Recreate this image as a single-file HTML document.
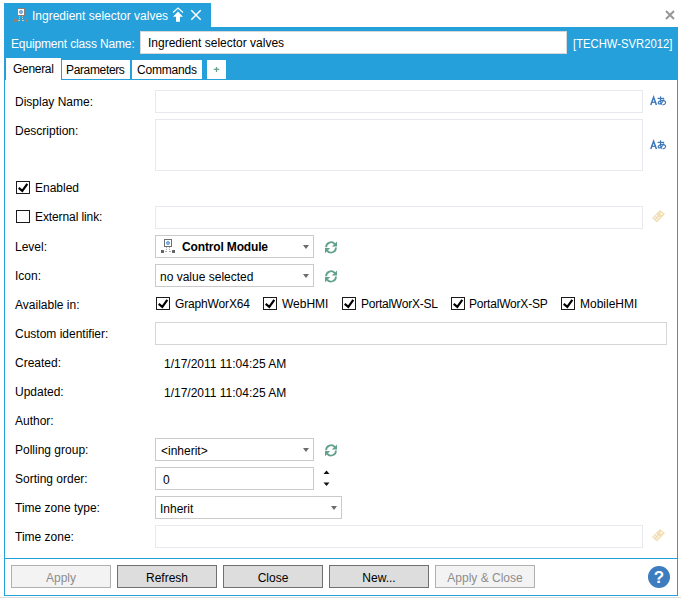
<!DOCTYPE html>
<html><head><meta charset="utf-8">
<style>
html,body{margin:0;padding:0;width:681px;height:599px;overflow:hidden;background:#fff;}
body{position:relative;font-family:"Liberation Sans",sans-serif;font-size:12px;color:#000;}
.a{position:absolute;}
.t{position:absolute;line-height:14px;white-space:nowrap;}
.inp{position:absolute;box-sizing:border-box;border:1px solid #e8e8ee;background:#fff;}
.cmb{position:absolute;box-sizing:border-box;border:1px solid #cacaca;background:#fff;}
.arr{position:absolute;width:0;height:0;border-left:3px solid transparent;border-right:3px solid transparent;border-top:4px solid #6b6b6b;}
.cb{position:absolute;box-sizing:border-box;width:14px;height:13px;border:1px solid #1a1a1a;background:#fff;}
.btn{position:absolute;box-sizing:border-box;width:100px;height:23px;top:565px;border:1px solid #707070;background:#dddddd;text-align:center;line-height:25px;color:#000;}
.btn.dis{border-color:#adb1b4;background:#f3f3f3;color:#8d8d8d;}
</style></head><body>
<!-- title tab -->
<div class="a" style="left:4px;top:3px;width:207px;height:24px;background:#26a0da;"></div>
<div class="t" style="left:32px;top:9px;color:#fff;">Ingredient selector valves</div>
<!-- window close x -->
<svg class="a" style="left:664px;top:9px" width="12" height="12" viewBox="0 0 12 12"><path d="M2 2L10 10M10 2L2 10" stroke="#979797" stroke-width="2"/></svg>
<!-- header -->
<div class="a" style="left:4px;top:27px;width:674px;height:33px;background:#26a0da;"></div>
<div class="t" style="left:11px;top:37px;color:#fff;letter-spacing:-0.15px;">Equipment class Name:</div>
<div class="a" style="left:140px;top:31px;width:427px;height:23px;background:#fff;box-sizing:border-box;border:1px solid #d8d8d8;"></div>
<div class="t" style="left:148px;top:36px;">Ingredient selector valves</div>
<div class="t" style="left:573px;top:37px;color:#fff;transform:scaleX(0.94);transform-origin:0 0;">[TECHW-SVR2012]</div>
<!-- tab strip -->
<div class="a" style="left:4px;top:60px;width:674px;height:20px;background:#26a0da;"></div>
<div class="a" style="left:6px;top:58px;width:55px;height:22px;background:#fff;"></div>
<div class="t" style="left:13px;top:62px;letter-spacing:-0.3px;">General</div>
<div class="a" style="left:62px;top:60px;width:68px;height:19px;background:#fff;"></div>
<div class="t" style="left:66px;top:63px;letter-spacing:-0.35px;">Parameters</div>
<div class="a" style="left:132px;top:60px;width:70px;height:19px;background:#fff;"></div>
<div class="t" style="left:137px;top:63px;letter-spacing:-0.2px;">Commands</div>
<div class="a" style="left:207px;top:60px;width:19px;height:19px;background:#fff;"></div>
<svg class="a" style="left:213px;top:66px" width="7" height="7" viewBox="0 0 7 7"><path d="M0.8 3.4H6.2M3.5 0.9V6.1" stroke="#6aa08f" stroke-width="1.3"/></svg>
<!-- body borders -->
<div class="a" style="left:4px;top:80px;width:1px;height:516px;background:#26a0da;"></div>
<div class="a" style="left:677px;top:80px;width:1px;height:516px;background:#26a0da;"></div>
<div class="a" style="left:4px;top:558px;width:674px;height:1px;background:#26a0da;"></div>
<div class="a" style="left:4px;top:595px;width:674px;height:1px;background:#26a0da;"></div>
<div class="a" style="left:0px;top:597px;width:681px;height:1px;background:#dcdcdc;"></div>

<!-- rows -->
<div class="t" style="left:15px;top:95px;">Display Name:</div>
<div class="inp" style="left:155px;top:90px;width:488px;height:23px;"></div>
<svg class="a" style="left:649px;top:95px" width="18" height="11" viewBox="649 95 18 11"><g stroke="#3b79bd" fill="none" stroke-width="1.5"><path d="M650.8 104.9L653.6 97.2L656.4 104.9"/><path d="M651.9 102.3H655.3" stroke-width="1.2"/><path d="M657.6 98.4H664.2" stroke-width="1.2"/><path d="M660.6 96.4C660.2 99.5 660.4 102 661.6 104.8" stroke-width="1.2"/><path d="M663.8 99.6C662.3 103 659.8 104.6 658.6 103.7C657.4 102.8 659.2 100.4 662.2 100.4C664.8 100.4 665.9 101.8 665.5 103.1C665.1 104.2 663.8 104.7 662.6 104.8" stroke-width="1.2"/></g></svg>

<div class="t" style="left:15px;top:124px;">Description:</div>
<div class="inp" style="left:155px;top:119px;width:488px;height:52px;"></div>
<svg class="a" style="left:649px;top:139px" width="18" height="11" viewBox="649 95 18 11"><g stroke="#3b79bd" fill="none" stroke-width="1.5"><path d="M650.8 104.9L653.6 97.2L656.4 104.9"/><path d="M651.9 102.3H655.3" stroke-width="1.2"/><path d="M657.6 98.4H664.2" stroke-width="1.2"/><path d="M660.6 96.4C660.2 99.5 660.4 102 661.6 104.8" stroke-width="1.2"/><path d="M663.8 99.6C662.3 103 659.8 104.6 658.6 103.7C657.4 102.8 659.2 100.4 662.2 100.4C664.8 100.4 665.9 101.8 665.5 103.1C665.1 104.2 663.8 104.7 662.6 104.8" stroke-width="1.2"/></g></svg>

<div class="cb" style="left:16px;top:181px;"></div>
<svg class="a" style="left:16px;top:181px" width="14" height="13" viewBox="0 0 14 13"><path d="M2.7 6.9L6.3 9.8L11.3 2.8" stroke="#000" stroke-width="2.2" fill="none"/></svg>
<div class="t" style="left:35px;top:181px;">Enabled</div>

<div class="cb" style="left:16px;top:210px;"></div>
<div class="t" style="left:35px;top:210px;letter-spacing:-0.1px;">External link:</div>
<div class="inp" style="left:155px;top:206px;width:488px;height:23px;"></div>

<div class="t" style="left:15px;top:240px;">Level:</div>
<div class="cmb" style="left:155px;top:235px;width:159px;height:23px;"></div>
<div class="t" style="left:182px;top:240px;font-weight:bold;letter-spacing:-0.15px;">Control Module</div>
<div class="arr" style="left:303px;top:245px;"></div>

<div class="t" style="left:15px;top:269px;">Icon:</div>
<div class="cmb" style="left:155px;top:264px;width:159px;height:23px;"></div>
<div class="t" style="left:160px;top:270px;">no value selected</div>
<div class="arr" style="left:303px;top:274px;"></div>

<div class="t" style="left:15px;top:298px;">Available in:</div>
<div class="cb" style="left:156px;top:297px;"></div>
<div class="t" style="left:175px;top:297px;letter-spacing:-0.15px;">GraphWorX64</div>
<div class="cb" style="left:263px;top:297px;"></div>
<div class="t" style="left:282px;top:297px;">WebHMI</div>
<div class="cb" style="left:342px;top:297px;"></div>
<div class="t" style="left:361px;top:297px;letter-spacing:-0.25px;">PortalWorX-SL</div>
<div class="cb" style="left:451px;top:297px;"></div>
<div class="t" style="left:469px;top:297px;letter-spacing:-0.2px;">PortalWorX-SP</div>
<div class="cb" style="left:561px;top:297px;"></div>
<div class="t" style="left:580px;top:297px;">MobileHMI</div>

<div class="t" style="left:15px;top:327px;">Custom identifier:</div>
<div class="inp" style="left:155px;top:322px;width:512px;height:23px;border-color:#d6d6d6;"></div>

<div class="t" style="left:15px;top:356px;">Created:</div>
<div class="t" style="left:164px;top:357px;">1/17/2011 11:04:25 AM</div>
<div class="t" style="left:15px;top:385px;">Updated:</div>
<div class="t" style="left:164px;top:386px;">1/17/2011 11:04:25 AM</div>
<div class="t" style="left:15px;top:414px;">Author:</div>

<div class="t" style="left:15px;top:443px;">Polling group:</div>
<div class="cmb" style="left:155px;top:438px;width:159px;height:23px;"></div>
<div class="t" style="left:161px;top:444px;">&lt;inherit&gt;</div>
<div class="arr" style="left:303px;top:448px;"></div>

<div class="t" style="left:15px;top:472px;">Sorting order:</div>
<div class="cmb" style="left:155px;top:467px;width:159px;height:23px;"></div>
<div class="t" style="left:163px;top:473px;">0</div>

<div class="t" style="left:15px;top:501px;">Time zone type:</div>
<div class="cmb" style="left:155px;top:496px;width:187px;height:23px;"></div>
<div class="t" style="left:160px;top:502px;">Inherit</div>
<div class="arr" style="left:331px;top:506px;"></div>

<div class="t" style="left:15px;top:530px;">Time zone:</div>
<div class="inp" style="left:155px;top:525px;width:488px;height:23px;"></div>

<!-- buttons -->
<div class="btn dis" style="left:11px;">Apply</div>
<div class="btn" style="left:117px;">Refresh</div>
<div class="btn" style="left:223px;">Close</div>
<div class="btn" style="left:329px;">New...</div>
<div class="btn dis" style="left:435px;">Apply &amp; Close</div>
<div class="a" style="left:648px;top:566px;width:22px;height:22px;border-radius:50%;background:#3d7cbf;color:#fff;font-weight:bold;font-size:17px;line-height:24px;text-align:center;">?</div>

<!-- ICONS -->
<svg class="a" style="left:14px;top:8px" width="14" height="14" viewBox="0 0 14 14">
<rect x="3.5" y="0.5" width="7" height="7" fill="#fff" stroke="#8e8079" stroke-width="1"/>
<circle cx="7" cy="4" r="1.6" fill="#8db4e0" stroke="#5b93d3" stroke-width="0.8"/>
<rect x="0" y="11" width="3" height="3" fill="#8f8279"/><rect x="11" y="11" width="3" height="3" fill="#8f8279"/>
<rect x="5" y="8.2" width="1" height="1" fill="#d8c8b0"/><rect x="8" y="8.2" width="1" height="1" fill="#d8c8b0"/>
<rect x="5" y="10" width="1" height="1" fill="#d8c8b0"/><rect x="8" y="10" width="1" height="1" fill="#d8c8b0"/>
<rect x="4" y="12" width="2" height="1" fill="#d8c8b0"/><rect x="8" y="12" width="2" height="1" fill="#d8c8b0"/>
</svg>
<svg class="a" style="left:172px;top:7px" width="12" height="16" viewBox="0 0 12 16">
<path d="M1 5.5L6 1L11 5.5" stroke="#fff" stroke-width="1.1" fill="none"/>
<path d="M1 9.7L6 4.4L11 9.7H8V14.8H4V9.7Z" fill="#fff"/>
</svg>
<svg class="a" style="left:190px;top:9px" width="12" height="12" viewBox="0 0 12 12"><path d="M1.3 1.3L10.7 10.7M10.7 1.3L1.3 10.7" stroke="#fff" stroke-width="1.5"/></svg>
<svg class="a" style="left:161px;top:239px" width="14" height="14" viewBox="0 0 14 14">
<rect x="3.5" y="0.5" width="7" height="7" fill="#fff" stroke="#6e6e6e" stroke-width="1"/>
<circle cx="7" cy="4" r="1.6" fill="#8db4e0" stroke="#5b93d3" stroke-width="0.8"/>
<rect x="0" y="11" width="3" height="3" fill="#666"/><rect x="11" y="11" width="3" height="3" fill="#666"/>
<rect x="5" y="8.2" width="1" height="1" fill="#999"/><rect x="8" y="8.2" width="1" height="1" fill="#999"/>
<rect x="5" y="10" width="1" height="1" fill="#aaa"/><rect x="8" y="10" width="1" height="1" fill="#aaa"/>
<rect x="4" y="12" width="2" height="1" fill="#aaa"/><rect x="8" y="12" width="2" height="1" fill="#aaa"/>
</svg>
<svg class="a" style="left:325px;top:241px" width="12" height="13" viewBox="0 0 12 13"><g fill="#62a18d"><path d="M1.1 6.2A4.9 4.9 0 0 1 9.9 3.2" stroke="#62a18d" stroke-width="1.8" fill="none"/><path d="M12 0.4V5.6H6.8Z"/><path d="M10.9 6.6A4.9 4.9 0 0 1 2.1 9.6" stroke="#62a18d" stroke-width="1.8" fill="none"/><path d="M0 12.2V7H5.2Z"/></g></svg>
<svg class="a" style="left:325px;top:270px" width="12" height="13" viewBox="0 0 12 13"><g fill="#62a18d"><path d="M1.1 6.2A4.9 4.9 0 0 1 9.9 3.2" stroke="#62a18d" stroke-width="1.8" fill="none"/><path d="M12 0.4V5.6H6.8Z"/><path d="M10.9 6.6A4.9 4.9 0 0 1 2.1 9.6" stroke="#62a18d" stroke-width="1.8" fill="none"/><path d="M0 12.2V7H5.2Z"/></g></svg>
<svg class="a" style="left:325px;top:444px" width="12" height="13" viewBox="0 0 12 13"><g fill="#62a18d"><path d="M1.1 6.2A4.9 4.9 0 0 1 9.9 3.2" stroke="#62a18d" stroke-width="1.8" fill="none"/><path d="M12 0.4V5.6H6.8Z"/><path d="M10.9 6.6A4.9 4.9 0 0 1 2.1 9.6" stroke="#62a18d" stroke-width="1.8" fill="none"/><path d="M0 12.2V7H5.2Z"/></g></svg>
<svg class="a" style="left:651px;top:210px" width="15" height="14" viewBox="0 0 15 14">
<path d="M9 0L14 4L6 12.5L1 8Z" fill="#f2dfb6"/>
<path d="M3.2 8.2L6 5.2M5.6 10.2L8.6 7" stroke="#fff" stroke-width="1.1" stroke-dasharray="1.6 0.9"/>
<circle cx="10.4" cy="3.7" r="1" fill="#fff"/>
</svg>
<svg class="a" style="left:651px;top:529px" width="15" height="14" viewBox="0 0 15 14">
<path d="M9 0L14 4L6 12.5L1 8Z" fill="#f2dfb6"/>
<path d="M3.2 8.2L6 5.2M5.6 10.2L8.6 7" stroke="#fff" stroke-width="1.1" stroke-dasharray="1.6 0.9"/>
<circle cx="10.4" cy="3.7" r="1" fill="#fff"/>
</svg>
<svg class="a" style="left:156px;top:297px" width="14" height="13" viewBox="0 0 14 13"><path d="M2.7 6.9L6.3 9.8L11.3 2.8" stroke="#000" stroke-width="2.2" fill="none"/></svg>
<svg class="a" style="left:263px;top:297px" width="14" height="13" viewBox="0 0 14 13"><path d="M2.7 6.9L6.3 9.8L11.3 2.8" stroke="#000" stroke-width="2.2" fill="none"/></svg>
<svg class="a" style="left:342px;top:297px" width="14" height="13" viewBox="0 0 14 13"><path d="M2.7 6.9L6.3 9.8L11.3 2.8" stroke="#000" stroke-width="2.2" fill="none"/></svg>
<svg class="a" style="left:451px;top:297px" width="14" height="13" viewBox="0 0 14 13"><path d="M2.7 6.9L6.3 9.8L11.3 2.8" stroke="#000" stroke-width="2.2" fill="none"/></svg>
<svg class="a" style="left:561px;top:297px" width="14" height="13" viewBox="0 0 14 13"><path d="M2.7 6.9L6.3 9.8L11.3 2.8" stroke="#000" stroke-width="2.2" fill="none"/></svg>
<svg class="a" style="left:323px;top:469px" width="7" height="18" viewBox="0 0 7 18"><path d="M0.5 5H6.5L3.5 1.5Z" fill="#111"/><path d="M0.5 13.5H6.5L3.5 17Z" fill="#111"/></svg>
</body></html>
